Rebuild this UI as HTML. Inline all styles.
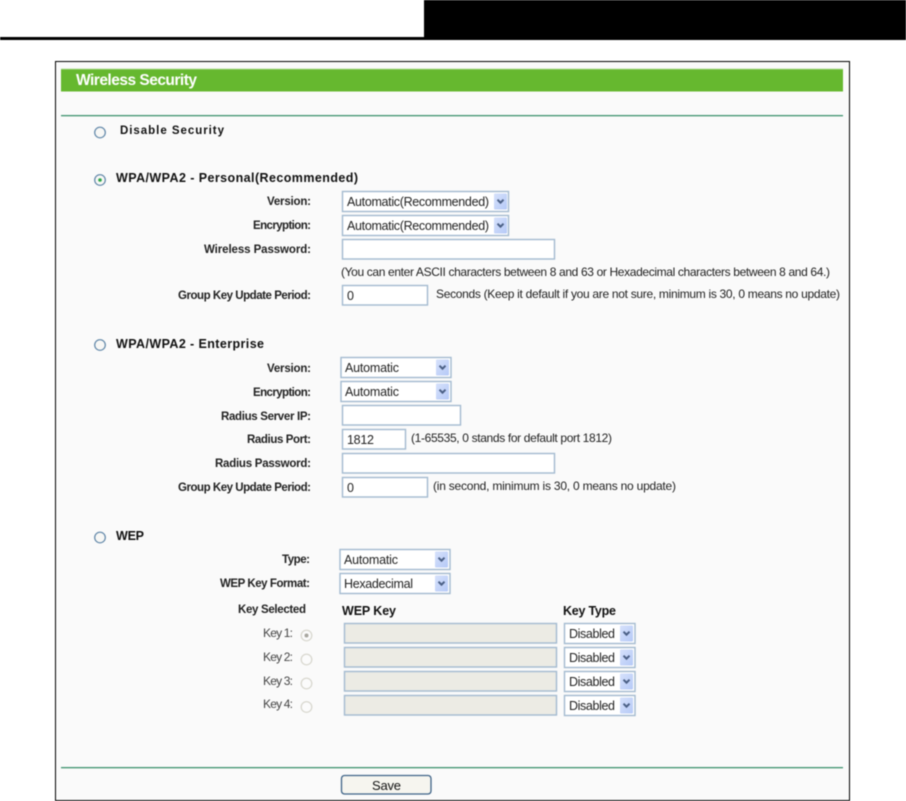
<!DOCTYPE html>
<html lang="en"><head><meta charset="utf-8"><title>Wireless Security</title>
<style>
html,body{margin:0;padding:0;background:#fff;width:906px;height:801px;overflow:hidden}
svg{display:block;filter:blur(.4px)}
text{font-family:"Liberation Sans",sans-serif;font-size:12.5px;fill:#222}
.b{font-weight:bold;font-size:12.5px;fill:#111}
.l{font-weight:bold;font-size:11.5px;fill:#222}
.h{font-size:12px}
.f{fill:#fff;stroke:#a3bad0;stroke-width:1.4}
.d{fill:#ecebe4;stroke:#a3bad0;stroke-width:1.4}
</style></head><body>
<svg width="906" height="801" viewBox="0 0 906 801" xmlns="http://www.w3.org/2000/svg">
<defs>
<linearGradient id="g" x1="0" y1="0" x2="1" y2="1"><stop offset="0" stop-color="#d6e1fb"/><stop offset="1" stop-color="#b5c9f7"/></linearGradient>
<g id="a"><rect x="0" y="0" width="13" height="16" rx="1" fill="url(#g)"/><path d="M3.5 6.2 6.5 9.2 9.5 6.2" fill="none" stroke="#4a5f85" stroke-width="2"/></g>
<g id="r"><circle r="5.3" fill="#f7f7f5" stroke="#5f86a8" stroke-width="1.2"/></g>
<g id="q"><circle r="5.3" fill="#fbfbfb" stroke="#d6d5cc" stroke-width="1.2"/></g>
</defs>
<rect width="906" height="801" fill="#fff"/>
<rect x="0" y="37" width="424" height="3" fill="#000"/>
<rect x="424" y="0" width="482" height="40" fill="#000"/>
<rect x="55.5" y="61.5" width="794" height="739" fill="#fafafa" stroke="#000"/>
<rect x="61" y="69" width="782" height="22.5" fill="#66b82f"/>
<rect x="61" y="68.5" width="782" height="1" fill="#b5dc9b"/>
<text x="76" y="85" textLength="121" style="font-size:15.5px;font-weight:bold;fill:#fff">Wireless Security</text>
<rect x="61" y="115" width="782" height="1.3" fill="#3f9470"/>
<rect x="61" y="767" width="782" height="1.3" fill="#3f9470"/>

<use href="#r" x="100" y="132.5"/>
<text class="b" x="120" y="134" textLength="104" style="font-size:11.5px">Disable Security</text>
<use href="#r" x="100" y="180"/><circle cx="100" cy="180" r="1.8" fill="#2fa84a"/>
<text class="b" x="116" y="182" textLength="242">WPA/WPA2 - Personal(Recommended)</text>

<text class="l" x="267" y="205" textLength="44">Version:</text>
<text class="l" x="253" y="229" textLength="58">Encryption:</text>
<text class="l" x="204" y="253" textLength="107">Wireless Password:</text>
<text class="l" x="178" y="299" textLength="133">Group Key Update Period:</text>

<rect class="f" x="342.5" y="191.5" width="166" height="20"/><use href="#a" x="494" y="193.5"/>
<text x="347" y="206" textLength="142">Automatic(Recommended)</text>
<rect class="f" x="342.5" y="215.5" width="166" height="20"/><use href="#a" x="494" y="217.5"/>
<text x="347" y="230" textLength="142">Automatic(Recommended)</text>
<rect class="f" x="342.5" y="239.5" width="212" height="19.5"/>
<text class="h" x="341" y="276" textLength="489">(You can enter ASCII characters between 8 and 63 or Hexadecimal characters between 8 and 64.)</text>
<rect class="f" x="342.5" y="285.5" width="85" height="19.5"/>
<text x="347" y="300">0</text>
<text class="h" x="436" y="298" textLength="404">Seconds (Keep it default if you are not sure, minimum is 30, 0 means no update)</text>

<use href="#r" x="100" y="345"/>
<text class="b" x="116" y="348" textLength="148">WPA/WPA2 - Enterprise</text>
<text class="l" x="267" y="372" textLength="44">Version:</text>
<text class="l" x="253" y="396" textLength="58">Encryption:</text>
<text class="l" x="221" y="420" textLength="90">Radius Server IP:</text>
<text class="l" x="247" y="443" textLength="64">Radius Port:</text>
<text class="l" x="215" y="467" textLength="96">Radius Password:</text>
<text class="l" x="178" y="491" textLength="133">Group Key Update Period:</text>

<rect class="f" x="341" y="357.5" width="110" height="20"/><use href="#a" x="436" y="359.5"/>
<text x="345" y="372" textLength="54">Automatic</text>
<rect class="f" x="341" y="381.5" width="110" height="20"/><use href="#a" x="436" y="383.5"/>
<text x="345" y="396" textLength="54">Automatic</text>
<rect class="f" x="342.5" y="405.5" width="118" height="19.5"/>
<rect class="f" x="342.5" y="429.5" width="63" height="19.5"/>
<text x="347" y="444" textLength="27">1812</text>
<text class="h" x="411" y="442" textLength="201">(1-65535, 0 stands for default port 1812)</text>
<rect class="f" x="342.5" y="453.5" width="212" height="19.5"/>
<rect class="f" x="342.5" y="477.5" width="85" height="19.5"/>
<text x="347" y="492">0</text>
<text class="h" x="433" y="490" textLength="243">(in second, minimum is 30, 0 means no update)</text>

<use href="#r" x="100" y="537.5"/>
<text class="b" x="116" y="540" textLength="28">WEP</text>
<text class="l" x="282" y="563" textLength="28">Type:</text>
<text class="l" x="220" y="587" textLength="90">WEP Key Format:</text>
<rect class="f" x="340" y="549.5" width="110" height="20"/><use href="#a" x="435" y="551.5"/>
<text x="344" y="564" textLength="54">Automatic</text>
<rect class="f" x="340" y="573.5" width="110" height="20"/><use href="#a" x="435" y="575.5"/>
<text x="344" y="588" textLength="69">Hexadecimal</text>

<text class="l" x="238" y="613" textLength="68">Key Selected</text>
<text class="b" x="342" y="615" textLength="54">WEP Key</text>
<text class="b" x="563" y="615" textLength="53">Key Type</text>

<text x="263" y="637" textLength="30" style="fill:#444;font-size:12px">Key 1:</text>
<text x="263" y="661" textLength="30" style="fill:#444;font-size:12px">Key 2:</text>
<text x="263" y="685" textLength="30" style="fill:#444;font-size:12px">Key 3:</text>
<text x="263" y="708" textLength="30" style="fill:#444;font-size:12px">Key 4:</text>
<use href="#q" x="306.5" y="635.5"/><circle cx="306.5" cy="635.5" r="2" fill="#a8a79f"/>
<use href="#q" x="306.5" y="659.5"/>
<use href="#q" x="306.5" y="683.5"/>
<use href="#q" x="306.5" y="707"/>

<rect class="d" x="344.5" y="623.5" width="212" height="19.5"/>
<rect class="d" x="344.5" y="647.5" width="212" height="19.5"/>
<rect class="d" x="344.5" y="671.5" width="212" height="19.5"/>
<rect class="d" x="344.5" y="695.5" width="212" height="19.5"/>

<rect class="f" x="564.5" y="623.5" width="70.5" height="20"/><use href="#a" x="620" y="625.5"/>
<text x="569" y="638" textLength="46">Disabled</text>
<rect class="f" x="564.5" y="647.5" width="70.5" height="20"/><use href="#a" x="620" y="649.5"/>
<text x="569" y="662" textLength="46">Disabled</text>
<rect class="f" x="564.5" y="671.5" width="70.5" height="20"/><use href="#a" x="620" y="673.5"/>
<text x="569" y="686" textLength="46">Disabled</text>
<rect class="f" x="564.5" y="695.5" width="70.5" height="20"/><use href="#a" x="620" y="697.5"/>
<text x="569" y="710" textLength="46">Disabled</text>

<rect x="341.5" y="775.5" width="89.5" height="18.5" rx="3" fill="#f6f5ef" stroke="#3f6488" stroke-width="1.3"/>
<text x="372" y="790" textLength="29" style="fill:#111;font-size:13px">Save</text>
</svg>
</body></html>
